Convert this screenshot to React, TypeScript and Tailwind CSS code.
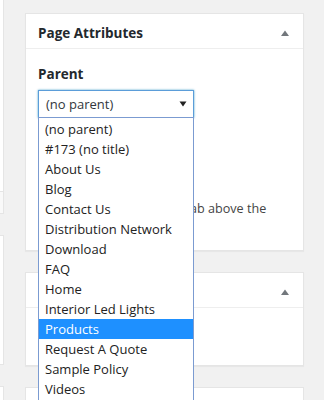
import type { ReactNode } from "react";

const PAGES = [
  "(no parent)",
  "#173 (no title)",
  "About Us",
  "Blog",
  "Contact Us",
  "Distribution Network",
  "Download",
  "FAQ",
  "Home",
  "Interior Led Lights",
  "Products",
  "Request A Quote",
  "Sample Policy",
  "Videos",
];

const FONT = "font-['Open_Sans','Noto_Sans',sans-serif]";

function Toggle() {
  return (
    <svg width="10" height="8" viewBox="0 0 10 8" className="shrink-0">
      <path d="M5 1.5 L9 7 L1 7 Z" fill="#72777c" />
    </svg>
  );
}

function Panel({ title, className = "", children }: { title?: string; className?: string; children?: ReactNode }) {
  return (
    <div className={`shrink-0 border border-[#e5e5e5] bg-white shadow-[0_1px_1px_rgba(0,0,0,0.04)] ${className}`}>
      <div className="flex h-[35px] items-center justify-between border-b border-[#eeeeee] pl-[12px] pr-[13px] pt-[4px]">
        <span className="text-[13.5px] font-bold text-[#23282d]">{title}</span>
        <Toggle />
      </div>
      {children}
    </div>
  );
}

function ParentSelect() {
  return (
    <div className="relative w-[156px]">
      <div className="flex h-[28px] items-center justify-between border border-[#5b9dd9] bg-white pl-[7px] pr-[6px] text-[13px] text-[#32373c] shadow-[0_0_2px_rgba(30,140,190,0.8)]">
        <span>(no parent)</span>
        <svg width="8" height="6" viewBox="0 0 8 6">
          <path d="M0.5 0.5 L7.5 0.5 L4 5.5 Z" fill="#222" />
        </svg>
      </div>
      {/* open dropdown list lies over the rest of the page */}
      <ul className="absolute left-0 top-[27px] z-10 w-[156px] border border-[#7b9bd1] bg-white py-[1px]">
        {PAGES.map((p) => (
          <li
            key={p}
            className={`flex h-[20px] items-center pl-[6px] text-[13px] leading-none ${
              p === "Products" ? "bg-[#1e90ff] text-white" : "text-[#222]"
            }`}
          >
            {p}
          </li>
        ))}
      </ul>
    </div>
  );
}

export default function App() {
  return (
    <div className={`flex h-[400px] w-[324px] overflow-hidden bg-[#f1f1f1] ${FONT}`}>
      <div className="flex w-[4px] shrink-0 flex-col">
        <div className="h-[192px] shrink-0 border-r border-b border-[#e5e5e5] bg-white" />
        <div className="h-[22px] shrink-0 border-r border-b border-[#e5e5e5] bg-[#f9f9f9]" />
        <div className="mt-[21px] h-[130px] shrink-0 border-r border-y border-[#e5e5e5] bg-white" />
        <div className="mt-[21px] h-[40px] shrink-0 border-r border-t border-[#e5e5e5] bg-white" />
      </div>

      <div className="ml-[21px] flex w-[279px] shrink-0 flex-col pt-[13px]">
        <Panel title="Page Attributes" className="h-[238px]">
          <div className="px-[12px] pt-[15px]">
            <div className="text-[13.5px] font-bold text-[#23282d]">Parent</div>
            <div className="mt-[6px]">
              <ParentSelect />
            </div>
            <div className="mt-[10px] text-[13.5px] font-bold text-[#23282d]">Order</div>
            <div className="mt-[6px] h-[28px] w-[60px] border border-[#ddd]" />
            <p className="mt-[16px] text-[12.6px] leading-[20px] text-[#444]">
              Need help? Use the Help tab above the
              <br />
              screen title.
            </p>
          </div>
        </Panel>

        <Panel title="Featured Image" className="mt-[21px] h-[94px]">
          <div className="px-[12px] pt-[12px]">
            <a className="text-[13px] text-[#0073aa] underline">Set featured image</a>
          </div>
        </Panel>

        <div className="mt-[21px] h-[40px] shrink-0 border border-[#e5e5e5] bg-white" />
      </div>
    </div>
  );
}
